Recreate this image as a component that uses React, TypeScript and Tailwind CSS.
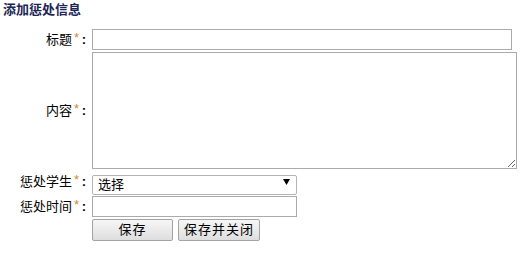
import React from "react";

const font = { fontFamily: '"Liberation Sans", "Noto Sans CJK SC", sans-serif' };

function Label({ text }: { text: string }) {
  return (
    <div className="flex w-[92px] shrink-0 items-center justify-end pr-[5px] text-[13px] leading-[16px] text-black">
      <span>{text}</span>
      <span className="relative -top-[2px] inline-block w-[9px] text-center text-[13px] leading-[10px] text-[#d08a2a]">*</span>
      <span className="inline-block w-[6px] text-center font-bold">:</span>
    </div>
  );
}

export default function App() {
  return (
    <div className="h-[257px] w-[523px] bg-white" style={font}>
      <h1 className="pl-[3px] pt-[1px] text-[13px] font-bold leading-[18px] text-[#1b2656]">
        添加惩处信息
      </h1>

      <div className="flex flex-col">
        {/* title */}
        <div className="mt-[10px] flex h-[21px]">
          <Label text="标题" />
          <input
            type="text"
            className="h-full w-[420px] border border-[#ababab] bg-white px-1 text-[13px] outline-none"
          />
        </div>

        {/* content */}
        <div className="mt-[2px] flex h-[117px]">
          <Label text="内容" />
          <textarea className="block h-full w-[425px] border border-[#ababab] bg-white px-1 text-[13px] outline-none" />
        </div>

        {/* student */}
        <div className="mt-[3px] flex h-[20px]">
          <Label text="惩处学生" />
          <div className="relative h-full w-[205px]">
            <select className="h-full w-full appearance-none rounded-[2px] border border-[#b4b4b4] bg-white pl-[5px] text-[13px] leading-[18px] text-black outline-none">
              <option>选择</option>
            </select>
            <svg className="pointer-events-none absolute right-[7px] top-[7px]" width="7" height="6" viewBox="0 0 7 6">
              <path d="M0 0H7L3.5 6Z" fill="#000" />
            </svg>
          </div>
        </div>

        {/* time */}
        <div className="mt-[4px] flex h-[21px]">
          <Label text="惩处时间" />
          <input
            type="text"
            className="h-full w-[205px] border border-[#ababab] bg-white px-1 text-[13px] outline-none"
          />
        </div>

        {/* buttons */}
        <div className="mt-[2px] flex h-[22px] pl-[92px] gap-[5px]">
          <button className="h-full w-[81px] rounded-[2px] border border-[#a3a3a3] bg-gradient-to-b from-[#f7f7f7] to-[#dedede] text-[13px] leading-[20px] tracking-[1px] text-black">
            保存
          </button>
          <button className="h-full w-[82px] rounded-[2px] border border-[#a3a3a3] bg-gradient-to-b from-[#f7f7f7] to-[#dedede] text-[13px] leading-[20px] tracking-[1px] text-black">
            保存并关闭
          </button>
        </div>
      </div>
    </div>
  );
}
